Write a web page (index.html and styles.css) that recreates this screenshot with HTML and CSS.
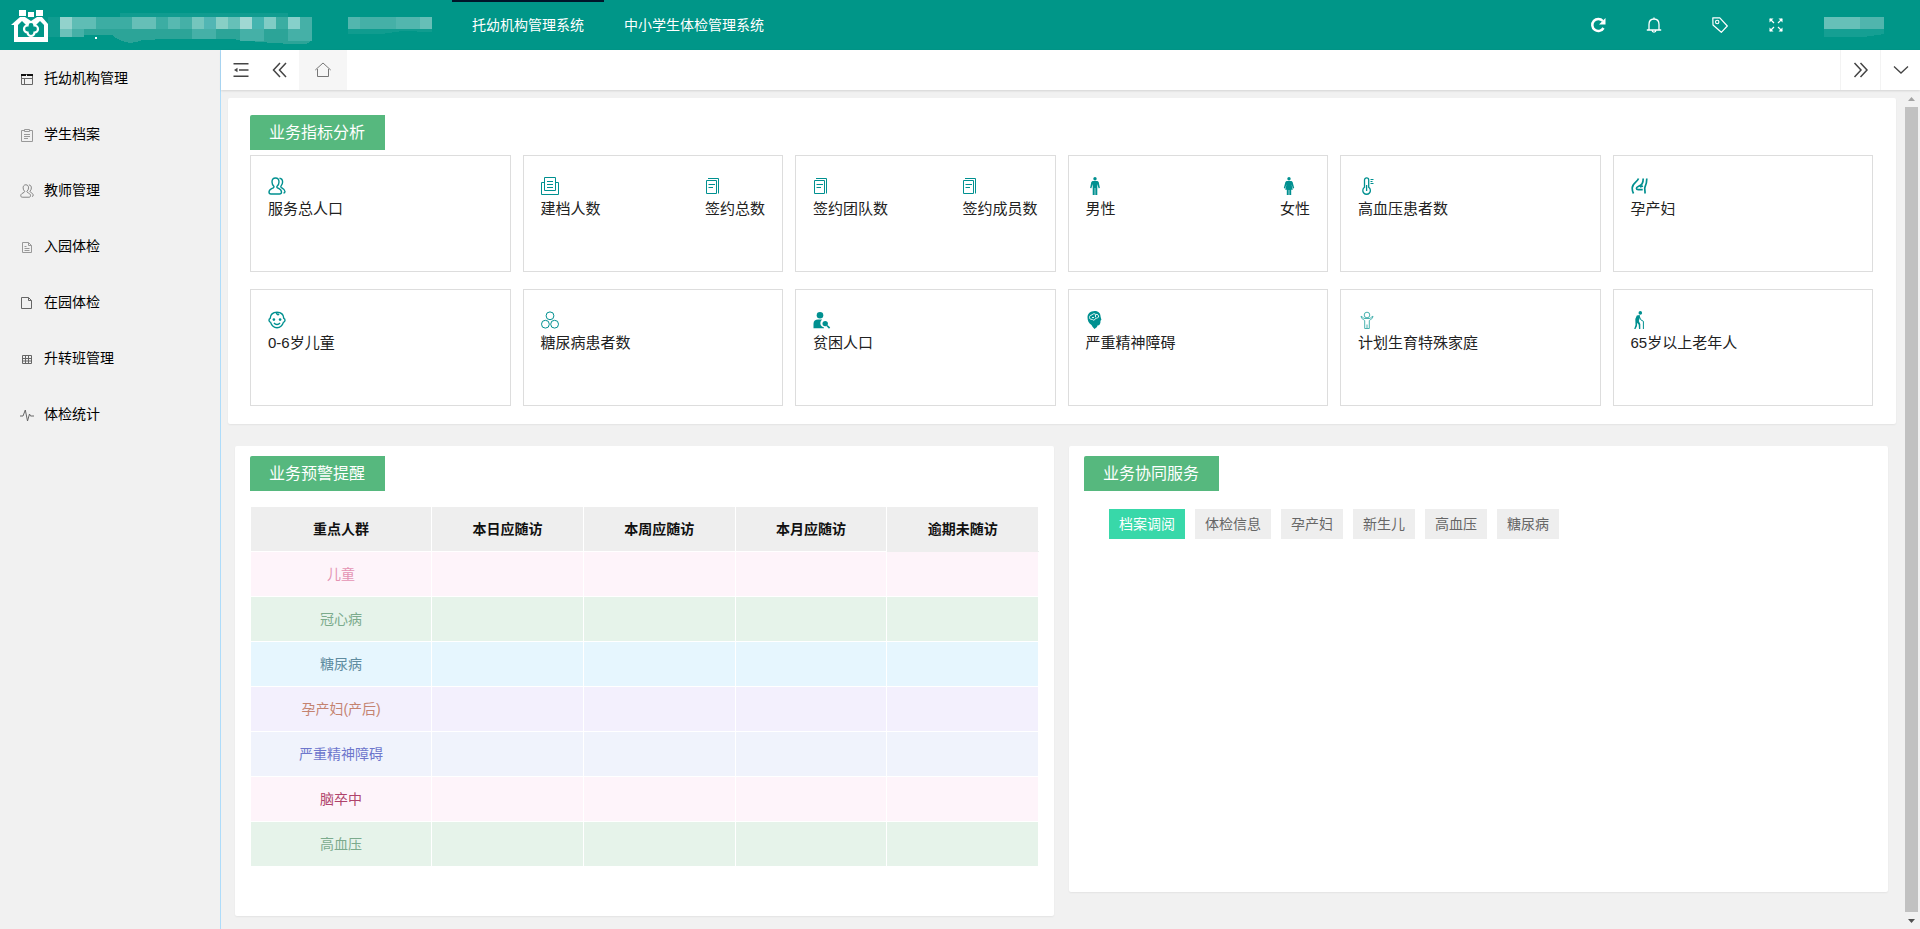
FILE: index.html
```html
<!DOCTYPE html>
<html lang="zh-CN">
<head>
<meta charset="utf-8">
<meta name="viewport" content="width=device-width, initial-scale=1">
<title>托幼机构管理系统</title>
<link rel="stylesheet" href="styles.css">
</head>
<body>
<svg class="sprite" aria-hidden="true">
  <symbol id="i-users" viewBox="0 0 18 18"><path d="M7.500 1C5 1 4 3 4 5c0 1.900.8 3.200 1.800 4.200.4.600.2 1.200-.5 1.600C3.300 11.800 1 12.600 1 15c0 1.300.7 2 2 2h8.500c1.400 0 2-.8 2-2 0-2.400-2.200-3.200-4-4.200-.7-.4-.9-1-.4-1.600C10.200 8.200 11 6.900 11 5c0-2-1-4-3.500-4zM11.500 1.200C13.700 1.400 14.600 3 14.600 5c0 1.700-.6 2.900-1.500 3.900-.5.600-.2 1.300.4 1.700 1.700 1 3.500 1.900 3.500 3.900 0 1-.5 1.500-1.500 1.500"/></symbol>
  <symbol id="i-archive" viewBox="0 0 18 18"><path d="M3.500 5.500h-3v12h17v-12h-3M3.500.5h11v13h-11zM6 4.500h6M6 7.500h6M6 10.500h6"/></symbol>
  <symbol id="i-sign" viewBox="0 0 18 18"><path d="M1.500 3.500h10v13h-10zM3 1.500h10.500v15M3.500 7.500h6.500M3.500 10.500h4.500"/></symbol>
  <symbol id="i-man" viewBox="0 0 18 18"><g fill="currentColor" stroke="none"><circle cx="9" cy="1.800" r="1.700"/><path d="M6.500 4h5l1.200 1 1.200 6-1.300.3-1.300-4.200V18H9.300v-7h-.6v7H6.700V7.100l-1.300 4.200-1.300-.3 1.200-6z"/></g></symbol>
  <symbol id="i-woman" viewBox="0 0 18 18"><g fill="currentColor" stroke="none"><circle cx="9" cy="1.800" r="1.700"/><path d="M6.500 4h5l1.100 1 1.600 6-1.200.5-1.600-4.300 1.400 5.600h-1.600V18H9.300v-5h-.6v5H6.800v-5.200H5.200l1.400-5.600L5 11.500 3.800 11l1.600-6z"/></g></symbol>
  <symbol id="i-thermo" viewBox="0 0 18 18"><path d="M6.500 10.300V3a2.100 2.100 0 0 1 4.200 0v7.300a3.800 3.800 0 1 1-4.200 0zM8.600 8v6" stroke-width="1.300"/><path d="M12.500 2.500h3M12.500 4.500h2M12.500 6.500h3"/></symbol>
  <symbol id="i-pregnant" viewBox="0 0 18 18"><path d="M7.500 1.500C6.500 5 1.200 6 1.200 11c0 2 .4 4 1.300 5.500M12.200 1.500c0 5-1.200 6.500-5 8-2.500 1-2.200 3.200 0 3.200h4.500M15.800 1.500c0 4-.5 6-1.800 8.500-.8 1.600.3 3.800 0 6.500M9 10l3-1" stroke-width="1.700"/></symbol>
  <symbol id="i-child" viewBox="0 0 18 18"><path d="M9 1.200c4.200 0 6.600 2.600 6.800 6.200 1.800.8 1.500 3.400-.4 4C14.400 14.600 12 16.700 9 16.700s-5.400-2.100-6.400-5.300c-1.900-.6-2.200-3.200-.4-4C2.400 3.800 4.800 1.200 9 1.200zM9 1.200c-1 2.200 1 3.200 2 1.800M6 12c1.600 2 4.400 2 6 0"/><g fill="currentColor" stroke="none"><circle cx="5.900" cy="8.600" r="1.300"/><circle cx="12.100" cy="8.600" r="1.300"/></g></symbol>
  <symbol id="i-rings" viewBox="0 0 18 18"><circle cx="9" cy="4.800" r="3.900"/><circle cx="4.400" cy="13.200" r="3.900"/><circle cx="13.600" cy="13.200" r="3.900"/></symbol>
  <symbol id="i-search-user" viewBox="0 0 18 18"><g fill="currentColor" stroke="none"><circle cx="7" cy="4.300" r="3.300"/><path d="M.5 17.300v-4.500C.5 10 2.500 8.600 5 8.600h4.200a4.400 4.400 0 0 0-.3 7l2.100.8v.9z"/><circle cx="12.200" cy="12.600" r="2.700"/></g><path d="M14 14.500l2.600 2.600" stroke-width="1.700"/></symbol>
  <symbol id="i-head" viewBox="0 0 18 18"><path fill="currentColor" stroke="none" d="M8.600 0c4.200 0 6 2.600 6 5.800l.8 3-.9.900c.1 3-.8 4.800-3 4.800L11 16l-2.500 2-2-2.200-1-1.800C2.700 12.500 1.500 9.500 1.500 6.300 1.500 2.800 4.300 0 8.600 0z"/><path stroke="#fff" stroke-width=".9" d="M3.500 6.500c0-2 1.200-2.500 2.500-2.500.5-1.500 3-1.700 3.800-.5C11.500 3 13 4.200 12.500 6c-1 2-3 .5-3.300 2-.6 1.500-2.500 1.400-3 .3-1.500.4-2.700-.4-2.700-1.800zM6 6.500h2M9.500 3.800v2.400"/></symbol>
  <symbol id="i-family" viewBox="0 0 18 18"><circle cx="9" cy="4" r="2.800"/><path d="M3 5.200c1.800.5 2 2.300 4 2.300h4c2 0 2.200-1.800 4-2.300M3 5.200l.7 2.100c1.300.6 2 1.800 3 2.200V17.500h4.600V9.500c1-.4 1.700-1.600 3-2.200l.7-2.100M9 13.500v4"/></symbol>
  <symbol id="i-elder" viewBox="0 0 18 18"><circle cx="9.300" cy="1.900" r="1.800" fill="currentColor" stroke="none"/><path fill="currentColor" stroke="none" d="M5.800 4.500L8.700 4 9 6l-1.200 4 1.500 3v5H8l-.3-4.300-1.500-2L6 15l-1.500 3H3.200l1.300-4-.2-6z"/><path d="M8.500 6l1.300 2.800 2.600 1.500V18"/></symbol>

  <symbol id="s-window" viewBox="0 0 14 14"><path d="M1.500 2.500h11v10h-11zM1.500 6.500h11M4.500 6.500v6"/><path d="M1 3h5M7 3h6" stroke="#111" stroke-width="2"/></symbol>
  <symbol id="s-clip" viewBox="0 0 14 14"><path d="M4.500 2.500h-3v11h11v-11h-3M4.500 1.500h5v2h-5zM4 6.500h6M4 8.500h6M4 10.500h4"/></symbol>
  <symbol id="s-doc" viewBox="0 0 14 14"><path d="M2.500 2.500h6l3 3v7h-9zM8.500 2.500v3h3M4.500 6.500h2M4.500 8.500h5M4.500 10.500h5"/></symbol>
  <symbol id="s-file" viewBox="0 0 14 14"><path d="M1.500 1.500h7l3 3v8h-10zM8.500 1.500v3h3"/></symbol>
  <symbol id="s-grid" viewBox="0 0 14 14"><path d="M2.500 3.500h9v8h-9zM2.500 6.500h9M2.500 9h9M5.500 3.500v8M8.500 3.500v8"/></symbol>
  <symbol id="s-pulse" viewBox="0 0 14 14"><path d="M0 8h3L5.300 2l2.200 11L9.500 6l1 2H14"/></symbol>

  <symbol id="t-fold" viewBox="0 0 16 16"><path d="M.5 1.800h15M6 8h9.500M.5 14.200h15" stroke-width="1.600"/><path d="M4.500 5.800v4.400L1 8z" fill="currentColor" stroke="none"/></symbol>
  <symbol id="t-left" viewBox="0 0 16 16"><path d="M8 1L1.500 8 8 15M14 1L7.500 8l6.500 7" stroke-width="1.500"/></symbol>
  <symbol id="t-right" viewBox="0 0 16 16"><path d="M1.500 1L8 8l-6.500 7M7.500 1L14 8l-6.500 7" stroke-width="1.500"/></symbol>
  <symbol id="t-down" viewBox="0 0 16 16"><path d="M1 4.500l7 6.500 7-6.500" stroke-width="1.300"/></symbol>
  <symbol id="t-home" viewBox="0 0 16 16"><path d="M.3 8L8 1l7.700 7M2.500 7v7.500h11V7"/></symbol>

  <symbol id="h-refresh" viewBox="0 0 16 16"><path d="M12.800 4A6 6 0 1 0 13.500 11" stroke-width="2.500"/><path d="M15.500 1v6.500H9z" fill="currentColor" stroke="none"/></symbol>
  <symbol id="h-bell" viewBox="0 0 16 16"><path d="M.8 13h14.400M3 13V7.500C3 3.800 5 2 8 2s5 1.800 5 5.500V13M6 13.300c.2 2.500 3.800 2.500 4 0M8 .5V2" stroke-width="1.300"/></symbol>
  <symbol id="h-tag" viewBox="0 0 16 16"><path d="M.8.800h7L15.300 9 9.300 15.300 1 8z" stroke-width="1.200" stroke-linejoin="round"/><circle cx="5.200" cy="5" r="1.700" stroke-width="1.100"/></symbol>
  <symbol id="h-full" viewBox="0 0 16 16"><path d="M2 2l4 4M14 2l-4 4M2 14l4-4M14 14l-4-4" stroke-width="1.200"/><path fill="currentColor" stroke="none" d="M1.500 1.500h4l-4 4zM14.500 1.500v4l-4-4zM1.500 14.500v-4l4 4zM14.500 14.500h-4l4-4z"/></symbol>
</svg>

<div class="app">
  <header class="header">
    <a class="brand" href="#" aria-label="首页">
      <svg class="brand-logo" viewBox="0 0 38 33"><path fill="#fff" d="M8 1h7v6H8zM17 3h6v5h-6zM25 1h7v6h-7z"/><path fill="#fff" d="M0 16L9 8h5l6 4 6-4h5l6 7v18H3V16z"/><path fill="#009688" d="M7 28V16l4-4 4 4h10l4-4 4 4v12z"/><path d="M16.500 16.500a3.500 3.500 0 0 1 7 0a3.500 3.500 0 0 1 0 7a3.500 3.500 0 0 1-7 0a3.500 3.500 0 0 1 0-7z" fill="#009688" stroke="#fff" stroke-width="2.200"/></svg>
      <svg class="brand-name" viewBox="0 -6 264 42" shape-rendering="crispEdges">
        <path fill="#109c90" d="M0 7h12v20H0zM72 3h168v4H72z"/>
        <path fill="#2ca498" d="M12 7h252v20q0 7-10 7-30 0-60-4-30-3-100 0-10 5-20 1-8-4-10-6H12z"/>
        <path fill="#92d2cc" d="M12 7h12v12H12z"/><path fill="#5fbdb5" d="M24 7h24v12H24z"/><path fill="#3cada3" d="M48 7h36v12H48z"/><path fill="#66bfb7" d="M84 7h24v12H84z"/><path fill="#3cada3" d="M108 7h12v12h-12z"/><path fill="#57b9b1" d="M120 7h12v12h-12z"/><path fill="#45b0a7" d="M132 7h12v12h-12z"/><path fill="#74c6bd" d="M144 7h12v12h-12z"/><path fill="#52b6b4" d="M156 7h12v12h-12z"/><path fill="#88cfc5" d="M168 7h12v12h-12z"/><path fill="#66c0b8" d="M180 7h12v12h-12z"/><path fill="#a0d8d3" d="M192 7h12v12h-12z"/><path fill="#45b5b0" d="M204 7h12v12h-12z"/><path fill="#80ccc5" d="M216 7h12v12h-12z"/><path fill="#3bada2" d="M228 7h12v12h-12z"/><path fill="#86d0ca" d="M240 7h12v12h-12z"/><path fill="#45b0a7" d="M252 7h12v12h-12z"/>
        <path fill="#6cc1ba" d="M12 19h12v8H12z"/><path fill="#45b0a7" d="M24 19h12v8H24zM144 19h24v10h-24zM192 19h24v12h-24zM240 19h24v12h-24z"/>
        <path fill="#fff" d="M47 27h2v2h-2z"/>
      </svg>
    </a>
    <nav class="nav" aria-label="系统">
      <a class="nav-item" href="#" aria-label="系统一"><svg class="nav-mask" viewBox="0 0 84 17" shape-rendering="crispEdges"><path fill="#45b0a7" d="M0 0h84v12H0z"/><path fill="#52b6ae" d="M0 0h12v12H0zM48 0h24v12H48z"/><path fill="#66bfb7" d="M72 0h12v12H72z"/><path fill="#109c8f" d="M0 12h84v3l-30-1-20 3H0z"/></svg></a>
      <a class="nav-item is-active" href="#">托幼机构管理系统</a>
      <a class="nav-item" href="#">中小学生体检管理系统</a>
    </nav>
    <div class="tools">
      <button class="tool" type="button" aria-label="刷新"><svg class="icon-16"><use href="#h-refresh"/></svg></button>
      <button class="tool tool-wide" type="button" aria-label="通知"><svg class="icon-16"><use href="#h-bell"/></svg></button>
      <button class="tool" type="button" aria-label="标签"><svg class="icon-16"><use href="#h-tag"/></svg></button>
      <button class="tool" type="button" aria-label="全屏"><svg class="icon-16"><use href="#h-full"/></svg></button>
      <a class="user" href="#" aria-label="用户"><svg class="user-mask" viewBox="0 0 60 20" shape-rendering="crispEdges"><path fill="#66c0b8" d="M0 0h36v12H0z"/><path fill="#50b5ad" d="M36 0h24v12H36z"/><path fill="#159f93" d="M0 12h60v5l-20 3H0z"/></svg></a>
    </div>
  </header>

  <aside class="sidebar">
    <a class="side-item" href="#"><svg class="side-icon dark"><use href="#s-window"/></svg>托幼机构管理</a>
    <a class="side-item" href="#"><svg class="side-icon"><use href="#s-clip"/></svg>学生档案</a>
    <a class="side-item" href="#"><svg class="side-icon dark"><use href="#i-users"/></svg>教师管理</a>
    <a class="side-item" href="#"><svg class="side-icon"><use href="#s-doc"/></svg>入园体检</a>
    <a class="side-item" href="#"><svg class="side-icon dark"><use href="#s-file"/></svg>在园体检</a>
    <a class="side-item" href="#"><svg class="side-icon dark"><use href="#s-grid"/></svg>升转班管理</a>
    <a class="side-item" href="#"><svg class="side-icon dark"><use href="#s-pulse"/></svg>体检统计</a>
  </aside>

  <div class="main">
    <div class="tabbar">
      <button class="tab-btn" type="button" aria-label="收起菜单"><svg class="icon-16"><use href="#t-fold"/></svg></button>
      <button class="tab-btn" type="button" aria-label="向左"><svg class="icon-16"><use href="#t-left"/></svg></button>
      <button class="tab-btn tab-home" type="button" aria-label="主页"><svg class="icon-16"><use href="#t-home"/></svg></button>
      <span class="spacer"></span>
      <button class="tab-btn tab-edge" type="button" aria-label="向右"><svg class="icon-16"><use href="#t-right"/></svg></button>
      <button class="tab-btn tab-edge" type="button" aria-label="更多"><svg class="icon-16"><use href="#t-down"/></svg></button>
    </div>

    <div class="view">
      <main class="content">
        <section class="panel metrics">
          <h2 class="badge">业务指标分析</h2>
          <div class="metric-grid">
            <div class="metric"><div class="stat"><svg class="stat-icon bold"><use href="#i-users"/></svg>服务总人口</div></div>
            <div class="metric"><div class="stat"><svg class="stat-icon"><use href="#i-archive"/></svg>建档人数</div><div class="stat"><svg class="stat-icon"><use href="#i-sign"/></svg>签约总数</div></div>
            <div class="metric"><div class="stat"><svg class="stat-icon"><use href="#i-sign"/></svg>签约团队数</div><div class="stat"><svg class="stat-icon"><use href="#i-sign"/></svg>签约成员数</div></div>
            <div class="metric"><div class="stat"><svg class="stat-icon"><use href="#i-man"/></svg>男性</div><div class="stat"><svg class="stat-icon"><use href="#i-woman"/></svg>女性</div></div>
            <div class="metric"><div class="stat"><svg class="stat-icon"><use href="#i-thermo"/></svg>高血压患者数</div></div>
            <div class="metric"><div class="stat"><svg class="stat-icon"><use href="#i-pregnant"/></svg>孕产妇</div></div>
            <div class="metric"><div class="stat"><svg class="stat-icon bold"><use href="#i-child"/></svg>0-6岁儿童</div></div>
            <div class="metric"><div class="stat"><svg class="stat-icon"><use href="#i-rings"/></svg>糖尿病患者数</div></div>
            <div class="metric"><div class="stat"><svg class="stat-icon"><use href="#i-search-user"/></svg>贫困人口</div></div>
            <div class="metric"><div class="stat"><svg class="stat-icon"><use href="#i-head"/></svg>严重精神障碍</div></div>
            <div class="metric"><div class="stat"><svg class="stat-icon thin"><use href="#i-family"/></svg>计划生育特殊家庭</div></div>
            <div class="metric"><div class="stat"><svg class="stat-icon"><use href="#i-elder"/></svg>65岁以上老年人</div></div>
          </div>
        </section>

        <div class="columns">
          <section class="panel alerts">
            <h2 class="badge">业务预警提醒</h2>
            <table class="alert-table">
              <thead><tr><th scope="col">重点人群</th><th scope="col">本日应随访</th><th scope="col">本周应随访</th><th scope="col">本月应随访</th><th scope="col">逾期未随访</th></tr></thead>
              <tbody>
                <tr class="row-pink"><td>儿童</td><td></td><td></td><td></td><td></td></tr>
                <tr class="row-green"><td>冠心病</td><td></td><td></td><td></td><td></td></tr>
                <tr class="row-cyan"><td>糖尿病</td><td></td><td></td><td></td><td></td></tr>
                <tr class="row-violet"><td>孕产妇(产后)</td><td></td><td></td><td></td><td></td></tr>
                <tr class="row-blue"><td>严重精神障碍</td><td></td><td></td><td></td><td></td></tr>
                <tr class="row-pink row-wine"><td>脑卒中</td><td></td><td></td><td></td><td></td></tr>
                <tr class="row-green"><td>高血压</td><td></td><td></td><td></td><td></td></tr>
              </tbody>
            </table>
          </section>
          <section class="panel services">
            <h2 class="badge">业务协同服务</h2>
            <div class="service-tabs">
              <button class="service-tab is-active" type="button">档案调阅</button>
              <button class="service-tab" type="button">体检信息</button>
              <button class="service-tab" type="button">孕产妇</button>
              <button class="service-tab" type="button">新生儿</button>
              <button class="service-tab" type="button">高血压</button>
              <button class="service-tab" type="button">糖尿病</button>
            </div>
            <div class="service-body"></div>
          </section>
        </div>
      </main>
      <div class="scrollbar" aria-hidden="true">
        <svg class="scroll-arrow light" viewBox="0 0 17 17"><path d="M5 11h7L8.500 7z"/></svg>
        <div class="scroll-thumb"></div>
        <svg class="scroll-arrow" viewBox="0 0 17 17"><path d="M5 7h7l-3.500 4z"/></svg>
      </div>
    </div>
  </div>
</div>
</body>
</html>
```
FILE: styles.css
```css
* { box-sizing: border-box; }

body {
  margin: 0;
  color: #222;
  background: #f1f1f1;
  font: 14px/20px "Liberation Sans", "Noto Sans CJK SC", sans-serif;
}

a { color: inherit; text-decoration: none; }
button { margin: 0; padding: 0; border: 0; background: none; color: inherit; font: inherit; cursor: pointer; }
svg { display: block; flex: none; fill: none; stroke: currentColor; }
.sprite { position: absolute; width: 0; height: 0; }
.icon-16 { width: 16px; height: 16px; }

.app {
  display: grid;
  grid-template: 50px minmax(0, 1fr) / 221px minmax(0, 1fr);
  height: 100vh;
}

/* header */
.header {
  grid-column: 1 / -1;
  display: flex;
  align-items: stretch;
  background: #009688;
  color: #fff;
}
.brand { display: flex; align-items: center; padding-left: 11px; }
.brand-logo { width: 38px; height: 33px; stroke: none; }
.brand-name { width: 264px; height: 42px; margin-left: -1px; stroke: none; }
.nav { display: flex; margin-left: 16px; }
.nav-item {
  display: flex;
  align-items: center;
  padding: 0 20px;
  border-top: 2px solid transparent;
  border-bottom: 2px solid transparent;
}
.nav-item.is-active { border-top-color: #001529; }
.nav-mask { width: 84px; height: 17px; stroke: none; }
.tools { display: flex; align-items: center; margin-left: auto; padding-right: 36px; }
.tool { display: flex; align-items: center; justify-content: center; width: 56px; height: 50px; }
.tool-wide + .tool { width: 76px; }
.tool-wide + .tool + .tool { width: 36px; }
.user { margin-left: 30px; padding-top: 3px; }
.user-mask { width: 60px; height: 20px; stroke: none; }

/* sidebar */
.sidebar { border-right: 1px solid #aedcfa; }
.side-item {
  display: flex;
  align-items: center;
  gap: 10px;
  height: 56px;
  padding-left: 20px;
  color: #000;
}
.side-icon { width: 14px; height: 16px; padding-top: 2px; color: #999; }
.side-icon.dark { color: #666; }

/* tab bar */
.main { display: flex; flex-direction: column; min-width: 0; }
.tabbar {
  position: relative;
  display: flex;
  height: 40px;
  background: #fff;
  color: #444;
  box-shadow: 0 1px 2px rgba(0, 0, 0, .12);
}
.tab-btn { display: flex; align-items: center; justify-content: center; width: 39px; }
.tab-home { width: 48px; background: #f6f6f6; color: #777; }
.tab-edge { width: 40px; border-left: 1px solid #f3f3f3; }
.spacer { flex: 1; }

/* content */
.view { display: flex; flex: 1; min-height: 0; }
.content { flex: 1; min-width: 0; padding: 8px 7px 0; overflow: hidden; }
.panel { background: #fff; border-radius: 2px; box-shadow: 0 1px 2px rgba(0, 0, 0, .06); }
.badge {
  width: max-content;
  margin: 0;
  padding: 0 20px 0 19px;
  border-radius: 2px 0 0 0;
  background: #56b87e;
  color: #fff;
  font-size: 16px;
  font-weight: 400;
  line-height: 35px;
}
.metrics { padding: 17px 23px 18px 22px; }
.metric-grid {
  display: grid;
  grid-template-columns: repeat(6, minmax(0, 1fr));
  gap: 17px 12px;
  margin-top: 5px;
}
.metric {
  display: flex;
  justify-content: space-between;
  min-height: 117px;
  padding: 21px 17px;
  border: 1px solid #ddd;
  font-size: 15px;
}
.stat { line-height: 28px; }
.stat-icon { width: 18px; height: 18px; color: #009090; stroke-width: 1; }
.stat-icon.bold { stroke-width: 1.400; }
.stat-icon.thin { color: #4ab3b0; }

.columns {
  display: grid;
  grid-template-columns: repeat(2, minmax(0, 1fr));
  align-items: start;
  gap: 15px;
  margin-top: 22px;
  padding: 0 8px 0 7px;
}
.alerts { padding: 10px 15px 49px; }
.alert-table {
  width: 100%;
  margin-top: 15px;
  border-collapse: collapse;
  table-layout: fixed;
  text-align: center;
}
.alert-table th, .alert-table td { height: 45px; padding: 0; border: 1px solid #fff; }
.alert-table th { background: #eee; color: #111; font-weight: 700; }
.alert-table th:first-child { width: 23%; }
.alert-table th:last-child { border-bottom-color: #eee; }
.row-pink { background: #fef4fa; color: #e493b3; }
.row-green { background: #e6f3ea; color: #7cab8d; }
.row-cyan { background: #e6f6fe; color: #5f8ca0; }
.row-violet { background: #f3f0fd; color: #c48370; }
.row-blue { background: #f0f3fc; color: #6e77cc; }
.row-wine { color: #b0436b; }

.services { padding: 10px 15px 0; }
.service-tabs { display: flex; flex-wrap: wrap; gap: 10px; margin-top: 18px; padding-left: 25px; }
.service-tab { height: 30px; padding: 0 10px; background: #eee; color: #666; }
.service-tab.is-active { background: #38d8a9; color: #fff; }
.service-body { min-height: 353px; }

.scrollbar { display: flex; flex-direction: column; width: 17px; background: #f1f1f1; }
.scroll-arrow { width: 17px; height: 17px; fill: #505050; stroke: none; }
.scroll-arrow.light { fill: #a3a3a3; }
.scroll-thumb { flex: 1; margin: 0 2px; background: #c1c1c1; }
```
